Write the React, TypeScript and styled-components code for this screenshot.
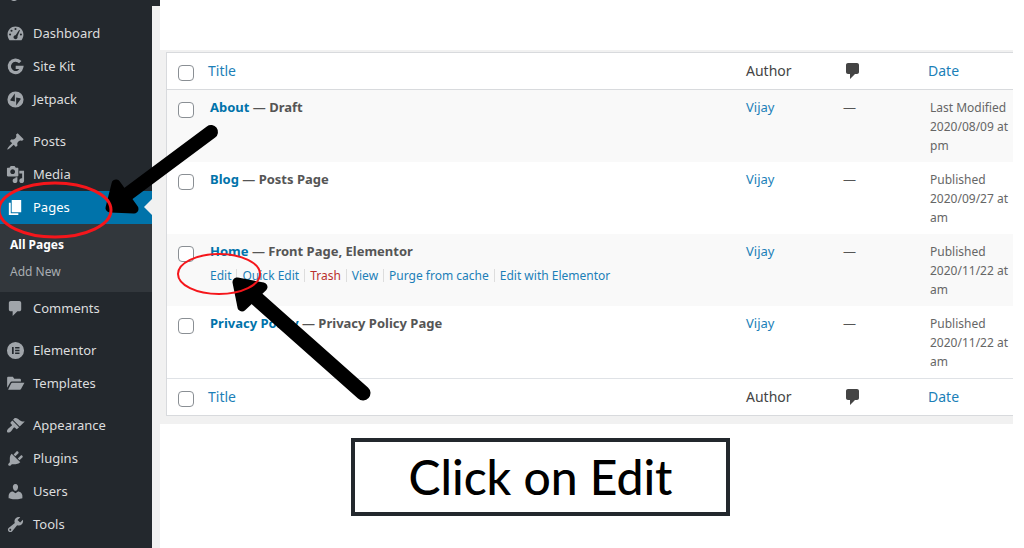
import React from "react";
import styled, { createGlobalStyle } from "styled-components";

const GlobalStyle = createGlobalStyle`
  * { box-sizing: border-box; }
  html, body { margin: 0; padding: 0; }
  body {
    background: #fff;
    font-family: "Noto Sans", "Open Sans", sans-serif;
    font-size: 13px;
    color: #555;
  }
  a { text-decoration: none; }
`;

const Page = styled.div`
  position: relative;
  display: flex;
  min-height: 100vh;
  overflow: hidden;
`;

const Sidebar = styled.nav`
  flex: none;
  width: 152px;
  background: #23282d;
`;

const SidebarTop = styled.div`
  height: 17px;
  padding-left: 10px;
  svg { display: block; }
`;

const MenuList = styled.ul`
  list-style: none;
  margin: 0;
  padding: 0;
`;

const MenuGroup = styled.li`
  & + & { margin-top: 9px; }
`;

const MenuLink = styled.a<{ $current?: boolean }>`
  position: relative;
  display: flex;
  align-items: center;
  gap: 8px;
  height: 33px;
  padding: 0 0 1px 6px;
  font-size: 13px;
  line-height: 18px;
  color: ${(p) => (p.$current ? "#fff" : "#dcddde")};
  background: ${(p) => (p.$current ? "#0073aa" : "transparent")};
  svg { flex: none; color: ${(p) => (p.$current ? "#fff" : "#a0a5aa")}; }
  &::after {
    content: ${(p) => (p.$current ? '""' : "none")};
    position: absolute;
    right: 0;
    top: 8px;
    border: 8px solid transparent;
    border-left-width: 0;
    border-right-color: #f1f1f1;
  }
`;

const SubMenu = styled(MenuList)`
  padding: 7px 0;
  background: #32373c;
`;

const SubLink = styled.a<{ $current?: boolean }>`
  display: block;
  padding-left: 10px;
  font-size: 12px;
  line-height: 27px;
  font-weight: ${(p) => (p.$current ? 700 : 400)};
  color: ${(p) => (p.$current ? "#fff" : "#a9aeb3")};
`;

const Gutter = styled.div`
  flex: none;
  width: 8px;
  background: #f1f1f1;
  border-top: 6px solid #23282d;
`;

const Main = styled.main`
  flex: 1;
  min-width: 0;
  padding: 50px 11px 0 0;
`;

const TablePanel = styled.div`
  background: #f1f1f1;
  padding: 2px 0 8px 6px;
  overflow: hidden;
`;

const PageTable = styled.table`
  width: 100%;
  table-layout: fixed;
  border-collapse: separate;
  border-spacing: 0;
  background: #fff;
  border: 1px solid #d8dadd;
  border-right: 0;
  th {
    height: 37px;
    padding: 0 0 0 8px;
    text-align: left;
    font-weight: 400;
    font-size: 14px;
    line-height: 20px;
    color: #444;
  }
  th svg { display: block; }
  thead th { border-bottom: 1px solid #d8dadd; }
  tfoot th { border-top: 1px solid #dfe2e6; }
  td {
    height: 72px;
    padding: 8px 0 7px 8px;
    vertical-align: top;
    line-height: 19px;
  }
  tbody tr:nth-child(odd) { background: #f9f9f9; }
`;

const Col = styled.col<{ $w?: number }>`
  width: ${(p) => (p.$w ? `${p.$w}px` : "auto")};
`;

const CheckBox = styled.input`
  appearance: none;
  display: block;
  width: 16px;
  height: 16px;
  margin: 4px 0 0 3px;
  border: 1px solid #8a8f94;
  border-radius: 4px;
  background: #fff;
`;

const Link = styled.a<{ $danger?: boolean }>`
  color: ${(p) => (p.$danger ? "#b9302c" : "#1c7fb8")};
`;

const TitleCell = styled.td`
  && { padding-left: 10px; }
`;

const Title = styled.strong`
  display: block;
  font-size: 13px;
  font-weight: 700;
  white-space: nowrap;
  a { color: #0073aa; }
`;

const Actions = styled.div`
  display: flex;
  padding-top: 5px;
  font-size: 12px;
  line-height: 19px;
  white-space: nowrap;
`;

const Divider = styled.span`
  width: 1px;
  height: 13px;
  margin: 3px 5px 0;
  background: #ddd;
`;

const DateCell = styled.td`
  && { padding-left: 10px; }
  white-space: nowrap;
  font-size: 12px;
  color: #666;
`;

const Callout = styled.p`
  width: 379px;
  margin: 14px 0 0 191px;
  padding: 0;
  border: 4px solid #23282d;
  background: #fff;
  color: #000;
  text-align: center;
  font-family: Lato, sans-serif;
  font-size: 48px;
  font-weight: 500;
  line-height: 70px;
`;

const Marks = styled.svg`
  position: absolute;
  left: 0;
  top: 0;
  pointer-events: none;
`;

const paths: Record<string, string> = {
  dashboard:
    "M3.76 17h12.48c1.34-1.63 2.1-3.6 2.1-6 0-4.6-3.7-8.3-8.34-8.3S1.66 6.4 1.66 11c0 2.4.76 4.37 2.1 6zM10 4.2a1.1 1.1 0 1 1 0 2.2 1.1 1.1 0 0 1 0-2.2zM5.8 6a1.1 1.1 0 1 1 0 2.2 1.1 1.1 0 0 1 0-2.2zM13.8 6.2l.9.5-2.6 6.2c.5 1.7-.6 3.1-2.1 3.1-1.6 0-2.6-1.6-1.9-3 .4-.8 1.2-1.1 2-1.2zM4.3 10a1.1 1.1 0 1 1 0 2.2 1.1 1.1 0 0 1 0-2.2zM15.7 10a1.1 1.1 0 1 1 0 2.2 1.1 1.1 0 0 1 0-2.2z",
  jetpack:
    "M10 1.5a8.5 8.5 0 1 0 0 17 8.5 8.5 0 0 0 0-17zM9.3 12.2L5 11.2c-.5-.2-.6-.6-.4-1L9.300 3.800zM10.700 16.200V7.800l4.300 1c.5.2.6.6.4 1z",
  posts:
    "M10.44 3.02l1.82-1.82 6.36 6.35-1.83 1.82c-1.05-.68-2.48-.57-3.41.36l-.75.75c-.92.93-1.04 2.35-.35 3.41l-1.83 1.82-2.41-2.41-2.8 2.79c-.42.42-3.38 2.71-3.8 2.29s1.86-3.39 2.28-3.81l2.79-2.79L4.1 9.36l1.83-1.82c1.05.69 2.48.57 3.4-.36l.75-.75c.93-.92 1.05-2.35.36-3.41z",
  media:
    "M13 11V4c0-.55-.45-1-1-1h-1.67L9 1H5L3.67 3H2c-.55 0-1 .45-1 1v7c0 .55.45 1 1 1h10c.55 0 1-.45 1-1zM7 4.5c1.38 0 2.5 1.12 2.5 2.5S8.38 9.5 7 9.5 4.5 8.38 4.5 7 5.62 4.5 7 4.5zM14 6h5v10.5c0 1.38-1.12 2.5-2.5 2.5S14 17.88 14 16.5s1.12-2.5 2.5-2.5c.17 0 .34.02.5.05V9h-3V6zm-4 8.05V13h2v3.5c0 1.38-1.12 2.5-2.5 2.5S7 17.88 7 16.5 8.12 14 9.5 14c.17 0 .34.02.5.05z",
  pages: "M6 15V2h10v13H6zm-1 1h8v2H3V5h2v11z",
  comments:
    "M5 2h9c1.1 0 2 .9 2 2v7c0 1.1-.9 2-2 2h-2l-5 5v-5H5c-1.1 0-2-.9-2-2V4c0-1.1.9-2 2-2z",
  elementor:
    "M10 1a9 9 0 1 0 0 18 9 9 0 0 0 0-18zM6.3 6.2h1.8v7.6H6.3zM9.6 6.2h4.6v1.6H9.6zM9.6 9.2h4.6v1.6H9.6zM9.6 12.2h4.6v1.6H9.6z",
  templates:
    "M1.2 14.5V4c0-.6.4-1 1-1h5l1.5 2h6c.6 0 1 .4 1 1v2H6.200c-.8 0-1.300.3-1.700 1zM2.200 16.500l3.200-6.500c.2-.5.600-.8 1.200-.8h12.800l-3.600 6.500c-.3.500-.6.800-1.200.8z",
  appearance:
    "M14.48 11.06L7.41 3.99l1.5-1.5c.5-.56 2.3-.47 3.51.32 1.21.8 1.43 1.28 2.91 2.1 1.18.64 2.45 1.26 4.45.85zm-.71.71L6.7 4.7 4.93 6.47c-.39.39-.39 1.02 0 1.41l1.06 1.06c.39.39.39 1.03 0 1.42-.6.6-1.43 1.11-2.21 1.69-.35.26-.7.53-1.01.84C1.43 14.23.4 16.08 1.4 17.07c.99 1 2.84-.03 4.18-1.36.31-.31.58-.66.85-1.02.57-.78 1.08-1.61 1.69-2.21.39-.39 1.02-.39 1.41 0l1.06 1.06c.39.39 1.02.39 1.41 0z",
  plugins:
    "M13.11 4.36L9.87 7.6 8 5.73l3.24-3.24c.35-.34 1.05-.2 1.56.32.52.51.66 1.21.31 1.55zm-8 1.77l.91-1.12 9.01 9.01-1.19.84c-.71.71-2.63 1.16-3.82 1.16H6.14L4.9 17.26c-.59.59-1.54.59-2.12 0-.59-.58-.59-1.53 0-2.12l1.24-1.24v-3.88c0-1.13.4-3.19 1.09-3.89zm7.26 3.97l3.24-3.24c.34-.35 1.04-.21 1.55.31.52.51.66 1.21.31 1.55l-3.24 3.25z",
  users:
    "M10 9.25c-2.27 0-2.73-3.44-2.73-3.44C7 4.02 7.82 2 9.97 2c2.16 0 2.98 2.02 2.71 3.81 0 0-.41 3.44-2.68 3.44zm0 2.57L12.72 10c2.39 0 4.52 2.33 4.52 4.53v2.49s-3.65 1.13-7.24 1.13c-3.65 0-7.24-1.13-7.24-1.13v-2.49c0-2.25 1.94-4.48 4.47-4.48z",
  tools:
    "M16.68 9.77c-1.34 1.34-3.3 1.67-4.95.99l-5.41 6.52c-.99.99-2.59.99-3.58 0s-.99-2.59 0-3.57l6.52-5.42c-.68-1.65-.35-3.61.99-4.95 1.28-1.28 3.12-1.62 4.72-1.06l-2.89 2.89 2.82 2.82 2.86-2.87c.53 1.58.18 3.39-1.08 4.65zM3.81 16.21c.4.39 1.04.39 1.43 0 .4-.4.4-1.04 0-1.43-.39-.4-1.03-.4-1.43 0-.39.39-.39 1.03 0 1.43z",
};

function Icon({ name, size = 19 }: { name: string; size?: number }) {
  return (
    <svg width={size} height={size} viewBox="0 0 20 20" fill="currentColor" aria-hidden="true">
      {name === "sitekit" ? (
        <path d="M15 5.400A6.600 6.600 0 1 0 16.600 10.900H10.200" fill="none" stroke="currentColor" strokeWidth="3.400" />
      ) : (
        <path fillRule="evenodd" d={paths[name]} />
      )}
    </svg>
  );
}

type Item = { icon: string; label: string; children?: string[] };

const menu: Item[][] = [
  [
    { icon: "dashboard", label: "Dashboard" },
    { icon: "sitekit", label: "Site Kit" },
    { icon: "jetpack", label: "Jetpack" },
  ],
  [
    { icon: "posts", label: "Posts" },
    { icon: "media", label: "Media" },
    { icon: "pages", label: "Pages", children: ["All Pages", "Add New"] },
    { icon: "comments", label: "Comments" },
  ],
  [
    { icon: "elementor", label: "Elementor" },
    { icon: "templates", label: "Templates" },
  ],
  [
    { icon: "appearance", label: "Appearance" },
    { icon: "plugins", label: "Plugins" },
    { icon: "users", label: "Users" },
    { icon: "tools", label: "Tools" },
  ],
];

const rows = [
  { title: "About", state: "Draft", date: ["Last Modified", "2020/08/09 at", "pm"] },
  { title: "Blog", state: "Posts Page", date: ["Published", "2020/09/27 at", "am"] },
  {
    title: "Home",
    state: "Front Page, Elementor",
    date: ["Published", "2020/11/22 at", "am"],
    actions: ["Edit", "Quick Edit", "Trash", "View", "Purge from cache", "Edit with Elementor"],
  },
  { title: "Privacy Policy", state: "Privacy Policy Page", date: ["Published", "2020/11/22 at", "am"] },
];

function HeadingRow() {
  return (
    <tr>
      <th>
        <CheckBox type="checkbox" aria-label="Select all pages" />
      </th>
      <th scope="col"><Link href="#title">Title</Link></th>
      <th scope="col">Author</th>
      <th scope="col" aria-label="Comments"><Icon name="comments" size={20} /></th>
      <th scope="col"><Link href="#date">Date</Link></th>
    </tr>
  );
}

export default function App() {
  return (
    <>
      <GlobalStyle />
      <Page>
        <Sidebar aria-label="Admin menu">
          <SidebarTop>
            <svg width="8" height="2" viewBox="0 0 8 2" aria-hidden="true">
              <path d="M1 0h6L5 1H3z" fill="#a0a5aa" />
            </svg>
          </SidebarTop>
          <MenuList>
            {menu.map((group) => (
              <MenuGroup key={group[0].label}>
                <MenuList>
                  {group.map((item) => (
                    <li key={item.label}>
                      <MenuLink href="#" $current={!!item.children}>
                        <Icon name={item.icon} />
                        {item.label}
                      </MenuLink>
                      {item.children && (
                        <SubMenu>
                          {item.children.map((child, i) => (
                            <li key={child}>
                              <SubLink href="#" $current={i === 0}>{child}</SubLink>
                            </li>
                          ))}
                        </SubMenu>
                      )}
                    </li>
                  ))}
                </MenuList>
              </MenuGroup>
            ))}
          </MenuList>
        </Sidebar>
        <Gutter />
        <Main>
          <TablePanel>
            <PageTable>
              <colgroup>
                <Col $w={33} />
                <Col />
                <Col $w={97} />
                <Col $w={85} />
                <Col $w={93} />
              </colgroup>
              <thead><HeadingRow /></thead>
              <tbody>
                {rows.map((row) => (
                  <tr key={row.title}>
                    <td>
                      <CheckBox type="checkbox" aria-label={`Select ${row.title}`} />
                    </td>
                    <TitleCell>
                      <Title>
                        <a href="#">{row.title}</a> — {row.state}
                      </Title>
                      {row.actions && (
                        <Actions>
                          {row.actions.map((action, i) => (
                            <React.Fragment key={action}>
                              {i > 0 && <Divider />}
                              <Link href="#" $danger={action === "Trash"}>{action}</Link>
                            </React.Fragment>
                          ))}
                        </Actions>
                      )}
                    </TitleCell>
                    <td><Link href="#">Vijay</Link></td>
                    <td>—</td>
                    <DateCell>
                      {row.date.map((line) => (
                        <div key={line}>{line}</div>
                      ))}
                    </DateCell>
                  </tr>
                ))}
              </tbody>
              <tfoot><HeadingRow /></tfoot>
            </PageTable>
          </TablePanel>
          <Callout>Click on Edit</Callout>
        </Main>
        <Marks width="400" height="420" viewBox="0 0 400 420" aria-hidden="true">
          <g stroke="#000" fill="#000" strokeLinecap="round" strokeLinejoin="round">
            <path d="M211 132L125 196" strokeWidth="14" />
            <path d="M116 184L110 208L134 209Z" strokeWidth="9" />
            <path d="M363 393L247 290" strokeWidth="15" />
            <path d="M237 282L263 287L242 307Z" strokeWidth="9" />
          </g>
          <g fill="none" stroke="#f5161b">
            <ellipse cx="55" cy="210" rx="56" ry="27" strokeWidth="3" />
            <ellipse cx="219" cy="274" rx="41" ry="20" strokeWidth="2" />
          </g>
        </Marks>
      </Page>
    </>
  );
}
